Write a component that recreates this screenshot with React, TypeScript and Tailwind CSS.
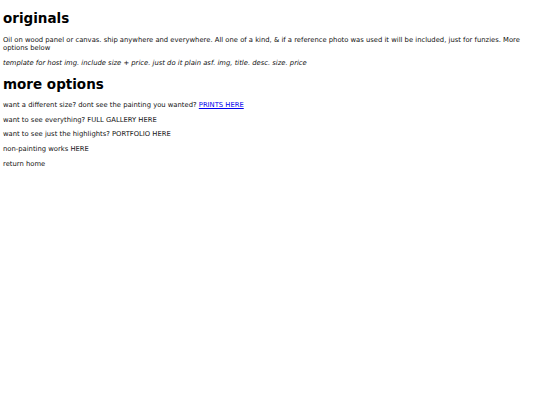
export default function App() {
  return (
    <div className="min-h-screen bg-white px-[3px] pt-[9px] text-black font-['DejaVu_Sans',Verdana,sans-serif]">
      <h1 className="text-[13.5px] font-bold leading-[18px]">originals</h1>
      <p className="mt-[9px] text-[6.8px] leading-[8px] text-[#111]">
        Oil on wood panel or canvas. ship anywhere and everywhere. All one of a kind, &amp; if a reference photo was used
        it will be included, just for funzies. More options below
      </p>
      <p className="mt-[7px] text-[6.8px] leading-[8px] italic text-[#111]">
        template for host img. include size + price. just do it plain asf. img, title. desc. size. price
      </p>
      <h2 className="mt-[8px] text-[13.5px] font-bold leading-[18px]">more options</h2>
      <div className="mt-[8px] flex flex-col gap-[6.7px] text-[6.8px] leading-[8px] text-[#111]">
        <p>
          want a different size? dont see the painting you wanted?{' '}
          <a href="#" className="text-[#0000ee] underline">PRINTS HERE</a>
        </p>
        <p>want to see everything? FULL GALLERY HERE</p>
        <p>want to see just the highlights? PORTFOLIO HERE</p>
        <p>non-painting works HERE</p>
        <p>return home</p>
      </div>
    </div>
  );
}
